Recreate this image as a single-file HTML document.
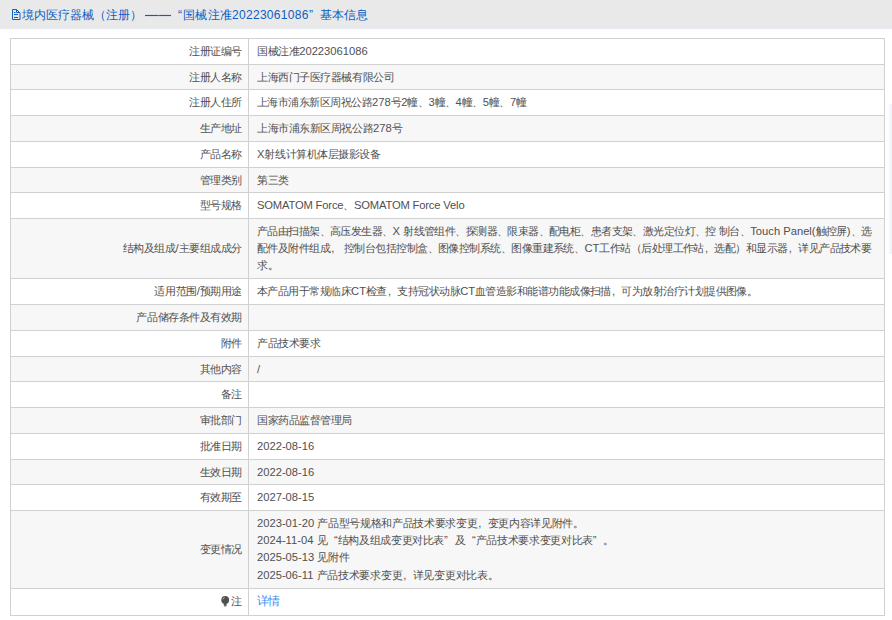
<!DOCTYPE html>
<html><head><meta charset="utf-8"><style>
html,body{margin:0;padding:0;width:892px;height:620px;overflow:hidden;background:#fff;}
body{position:relative;font-family:"Liberation Sans",sans-serif;font-size:11.2px;color:#505050;}
.hdr{position:absolute;left:0;top:0;width:892px;height:28px;background:#e9e9e9;border-bottom:1px solid #e8eaf2;}
.ht{position:absolute;top:5px;height:20px;line-height:20px;font-size:12px;color:#0a5ec4;white-space:nowrap;}
.tbl{position:absolute;left:10px;top:38px;width:875px;height:578px;}
.row{position:absolute;left:10px;width:875px;}
.hl{position:absolute;left:10px;width:875px;height:1px;background:#d1d1d1;}
.vl{position:absolute;top:38px;width:1px;height:578px;background:#d1d1d1;}
.lab{position:absolute;right:650px;white-space:nowrap;text-align:right;}
.val{position:absolute;left:257px;white-space:nowrap;}
.multi .ln{height:17px;line-height:17px;}
.c{letter-spacing:-0.45px;}
.ql,.qr{display:inline-block;width:10.5px;}
.ql{text-align:right;}
.fc{display:inline-block;width:10.5px;text-align:left;text-indent:1px;}
.qr{text-align:left;}
.link{color:#3a8ef6;font-size:12px;margin-top:-1px;}
.link .c{letter-spacing:-0.6px !important;}
.bulb{display:inline-block;vertical-align:middle;margin-right:1px;position:relative;top:-1px;}
.shadow{position:absolute;left:888px;top:104px;width:4px;height:150px;background:linear-gradient(to right,rgba(230,233,245,0),rgba(230,233,245,0.7));}
</style></head><body>
<div class="hdr"></div>
<svg style="position:absolute;left:11px;top:8px" width="10" height="12" viewBox="0 0 10 12"><path d="M1.5 1.5 H5.5 L9 5 V11.5 H1.5 Z" fill="none" stroke="#0a5ec4" stroke-width="1"/><path d="M5.5 1.5 V4.5 H9" fill="none" stroke="#0a5ec4" stroke-width="1"/><path d="M3 4.5 H4.5 M3 6.5 H7 M3 9.5 H7" stroke="#0a5ec4" stroke-width="1"/></svg>
<div class="ht" id="h1" style="left:22px">境内医疗器械（注册）</div>
<div style="position:absolute;left:145px;top:15px;width:26px;height:1px;background:#0a5ec4"></div>
<div style="position:absolute;left:158px;top:15px;width:1px;height:1px;background:#5a8ed0"></div>
<div style="position:absolute;left:145px;top:14px;width:26px;height:1px;background:rgba(10,94,196,0.08)"></div><div style="position:absolute;left:145px;top:16px;width:26px;height:1px;background:rgba(10,94,196,0.08)"></div>
<div class="ht" id="h2" style="left:178px">“</div>
<div class="ht" id="h3" style="left:182.5px;letter-spacing:0.5px">国械注准</div>
<div class="ht" id="h3b" style="left:232px;letter-spacing:0.3px">20223061086</div>
<div class="ht" id="h4" style="left:309px">”</div>
<div class="ht" id="h5" style="left:320px">基本信息</div>
<div class="row" style="top:38px;height:26px;background:#fff"></div>
<div class="row" style="top:64px;height:25px;background:#f7f7f7"></div>
<div class="row" style="top:89px;height:26px;background:#fff"></div>
<div class="row" style="top:115px;height:26px;background:#f7f7f7"></div>
<div class="row" style="top:141px;height:26px;background:#fff"></div>
<div class="row" style="top:167px;height:25px;background:#f7f7f7"></div>
<div class="row" style="top:192px;height:26px;background:#fff"></div>
<div class="row" style="top:218px;height:60px;background:#f7f7f7"></div>
<div class="row" style="top:278px;height:26px;background:#fff"></div>
<div class="row" style="top:304px;height:26px;background:#f7f7f7"></div>
<div class="row" style="top:330px;height:26px;background:#fff"></div>
<div class="row" style="top:356px;height:25px;background:#f7f7f7"></div>
<div class="row" style="top:381px;height:26px;background:#fff"></div>
<div class="row" style="top:407px;height:26px;background:#f7f7f7"></div>
<div class="row" style="top:433px;height:26px;background:#fff"></div>
<div class="row" style="top:459px;height:25px;background:#f7f7f7"></div>
<div class="row" style="top:484px;height:26px;background:#fff"></div>
<div class="row" style="top:510px;height:78px;background:#f7f7f7"></div>
<div class="row" style="top:588px;height:27px;background:#fff"></div>
<div class="hl" style="top:38px"></div>
<div class="hl" style="top:64px"></div>
<div class="hl" style="top:89px"></div>
<div class="hl" style="top:115px"></div>
<div class="hl" style="top:141px"></div>
<div class="hl" style="top:167px"></div>
<div class="hl" style="top:192px"></div>
<div class="hl" style="top:218px"></div>
<div class="hl" style="top:278px"></div>
<div class="hl" style="top:304px"></div>
<div class="hl" style="top:330px"></div>
<div class="hl" style="top:356px"></div>
<div class="hl" style="top:381px"></div>
<div class="hl" style="top:407px"></div>
<div class="hl" style="top:433px"></div>
<div class="hl" style="top:459px"></div>
<div class="hl" style="top:484px"></div>
<div class="hl" style="top:510px"></div>
<div class="hl" style="top:588px"></div>
<div class="hl" style="top:615px"></div>
<div class="vl" style="left:10px"></div>
<div class="vl" style="left:248px"></div>
<div class="vl" style="left:884px"></div>
<div class="lab" style="top:39px;height:25px;line-height:25px"><span class="c" style="letter-spacing:-0.450px">注册证编号</span></div>
<div class="lab" style="top:65px;height:24px;line-height:24px"><span class="c" style="letter-spacing:-0.450px">注册人名称</span></div>
<div class="lab" style="top:90px;height:25px;line-height:25px"><span class="c" style="letter-spacing:-0.450px">注册人住所</span></div>
<div class="lab" style="top:116px;height:25px;line-height:25px"><span class="c" style="letter-spacing:-0.450px">生产地址</span></div>
<div class="lab" style="top:142px;height:25px;line-height:25px"><span class="c" style="letter-spacing:-0.450px">产品名称</span></div>
<div class="lab" style="top:168px;height:24px;line-height:24px"><span class="c" style="letter-spacing:-0.450px">管理类别</span></div>
<div class="lab" style="top:193px;height:25px;line-height:25px"><span class="c" style="letter-spacing:-0.450px">型号规格</span></div>
<div class="lab" style="top:219px;height:59px;line-height:59px"><span class="c" style="letter-spacing:-0.450px">结构及组成</span>/<span class="c" style="letter-spacing:-0.450px">主要组成成分</span></div>
<div class="lab" style="top:279px;height:25px;line-height:25px"><span class="c" style="letter-spacing:-0.450px">适用范围</span>/<span class="c" style="letter-spacing:-0.450px">预期用途</span></div>
<div class="lab" style="top:305px;height:25px;line-height:25px"><span class="c" style="letter-spacing:-0.450px">产品储存条件及有效期</span></div>
<div class="lab" style="top:331px;height:25px;line-height:25px"><span class="c" style="letter-spacing:-0.450px">附件</span></div>
<div class="lab" style="top:357px;height:24px;line-height:24px"><span class="c" style="letter-spacing:-0.450px">其他内容</span></div>
<div class="lab" style="top:382px;height:25px;line-height:25px"><span class="c" style="letter-spacing:-0.450px">备注</span></div>
<div class="lab" style="top:408px;height:25px;line-height:25px"><span class="c" style="letter-spacing:-0.450px">审批部门</span></div>
<div class="lab" style="top:434px;height:25px;line-height:25px"><span class="c" style="letter-spacing:-0.450px">批准日期</span></div>
<div class="lab" style="top:460px;height:24px;line-height:24px"><span class="c" style="letter-spacing:-0.450px">生效日期</span></div>
<div class="lab" style="top:485px;height:25px;line-height:25px"><span class="c" style="letter-spacing:-0.450px">有效期至</span></div>
<div class="lab" style="top:511px;height:77px;line-height:77px"><span class="c" style="letter-spacing:-0.450px">变更情况</span></div>
<div class="lab" style="top:589px;height:26px;line-height:26px;margin-top:-1px"><svg class="bulb" width="9" height="11" viewBox="0 0 9 11"><circle cx="4.2" cy="4" r="3.9" fill="#505050"/><rect x="2.8" y="7.2" width="2.8" height="2.6" fill="#505050"/><rect x="3" y="9.8" width="2.4" height="0.9" fill="#9a9a9a"/><path d="M1.9 3.2 Q2.3 1.8 3.6 1.5" stroke="#cfd8e8" stroke-width="0.8" fill="none"/></svg><span class="c" style="letter-spacing:-0.450px">注</span></div>
<div class="val" id="v0_0" style="top:39px;height:25px;line-height:25px"><span class="c" style="letter-spacing:-0.450px">国械注准</span>20223061086</div>
<div class="val" id="v1_0" style="top:65px;height:24px;line-height:24px"><span class="c" style="letter-spacing:-0.450px">上海西门子医疗器械有限公司</span></div>
<div class="val" id="v2_0" style="top:90px;height:25px;line-height:25px"><span class="c" style="letter-spacing:-0.536px">上海市浦东新区周祝公路</span>278<span class="c" style="letter-spacing:-0.536px">号</span>2<span class="c" style="letter-spacing:-0.536px">幢、</span>3<span class="c" style="letter-spacing:-0.536px">幢、</span>4<span class="c" style="letter-spacing:-0.536px">幢、</span>5<span class="c" style="letter-spacing:-0.536px">幢、</span>7<span class="c" style="letter-spacing:-0.536px">幢</span></div>
<div class="val" id="v3_0" style="top:116px;height:25px;line-height:25px"><span class="c" style="letter-spacing:-0.450px">上海市浦东新区周祝公路</span>278<span class="c" style="letter-spacing:-0.450px">号</span></div>
<div class="val" id="v4_0" style="top:142px;height:25px;line-height:25px">X<span class="c" style="letter-spacing:-0.450px">射线计算机体层摄影设备</span></div>
<div class="val" id="v5_0" style="top:168px;height:24px;line-height:24px"><span class="c" style="letter-spacing:-0.450px">第三类</span></div>
<div class="val" id="v6_0" style="top:193px;height:25px;line-height:25px;letter-spacing:-0.16px">SOMATOM Force<span class="c" style="letter-spacing:-0.450px">、</span>SOMATOM Force Velo</div>
<div class="val" id="v7_0" style="top:223px;height:17px;line-height:17px"><span class="c" style="letter-spacing:-0.575px">产品由扫描架、高压发生器、</span>X <span class="c" style="letter-spacing:-0.575px">射线管组件、探测器、限束器、配电柜、患者支架、激光定位灯、控</span> <span class="c" style="letter-spacing:-0.575px">制台、</span>Touch Panel(<span class="c" style="letter-spacing:-0.575px">触控屏</span>)<span class="c" style="letter-spacing:-0.575px">、选</span></div>
<div class="val" id="v7_1" style="top:240px;height:17px;line-height:17px"><span class="c" style="letter-spacing:-0.541px">配件及附件组成<span class="fc">,</span></span>  <span class="c" style="letter-spacing:-0.541px">控制台包括控制盒、图像控制系统、图像重建系统、</span>CT<span class="c" style="letter-spacing:-0.541px">工作站（后处理工作站<span class="fc">,</span>选配）和显示器<span class="fc">,</span>详见产品技术要</span></div>
<div class="val" id="v7_2" style="top:257px;height:17px;line-height:17px"><span class="c" style="letter-spacing:-0.450px">求。</span></div>
<div class="val" id="v8_0" style="top:279px;height:25px;line-height:25px"><span class="c" style="letter-spacing:-0.548px">本产品用于常规临床</span>CT<span class="c" style="letter-spacing:-0.548px">检查<span class="fc">,</span>支持冠状动脉</span>CT<span class="c" style="letter-spacing:-0.548px">血管造影和能谱功能成像扫描<span class="fc">,</span>可为放射治疗计划提供图像。</span></div>
<div class="val" id="v9_0" style="top:305px;height:25px;line-height:25px"></div>
<div class="val" id="v10_0" style="top:331px;height:25px;line-height:25px"><span class="c" style="letter-spacing:-0.450px">产品技术要求</span></div>
<div class="val" id="v11_0" style="top:357px;height:24px;line-height:24px">/</div>
<div class="val" id="v12_0" style="top:382px;height:25px;line-height:25px"></div>
<div class="val" id="v13_0" style="top:408px;height:25px;line-height:25px"><span class="c" style="letter-spacing:-0.450px">国家药品监督管理局</span></div>
<div class="val" id="v14_0" style="top:434px;height:25px;line-height:25px">2022-08-16</div>
<div class="val" id="v15_0" style="top:460px;height:24px;line-height:24px">2022-08-16</div>
<div class="val" id="v16_0" style="top:485px;height:25px;line-height:25px">2027-08-15</div>
<div class="val" id="v17_0" style="top:515px;height:17px;line-height:17px">2023-01-20 <span class="c" style="letter-spacing:-0.338px">产品型号规格和产品技术要求变更<span class="fc">,</span>变更内容详见附件。</span></div>
<div class="val" id="v17_1" style="top:532px;height:17px;line-height:17px">2024-11-04 <span class="c" style="letter-spacing:-0.358px">见</span><span class="ql">“</span><span class="c" style="letter-spacing:-0.358px">结构及组成变更对比表</span><span class="qr">”</span><span class="c" style="letter-spacing:-0.358px">及</span><span class="ql">“</span><span class="c" style="letter-spacing:-0.358px">产品技术要求变更对比表</span><span class="qr">”</span><span class="c" style="letter-spacing:-0.358px">。</span></div>
<div class="val" id="v17_2" style="top:549px;height:17px;line-height:17px">2025-05-13 <span class="c" style="letter-spacing:0.017px">见附件</span></div>
<div class="val" id="v17_3" style="top:567px;height:17px;line-height:17px">2025-06-11 <span class="c" style="letter-spacing:-0.285px">产品技术要求变更<span class="fc">,</span>详见变更对比表。</span></div>
<div class="val link" id="v18_0" style="top:589px;height:26px;line-height:26px"><span class="c" style="letter-spacing:-0.450px">详情</span></div>
<div class="shadow"></div>
</body></html>
